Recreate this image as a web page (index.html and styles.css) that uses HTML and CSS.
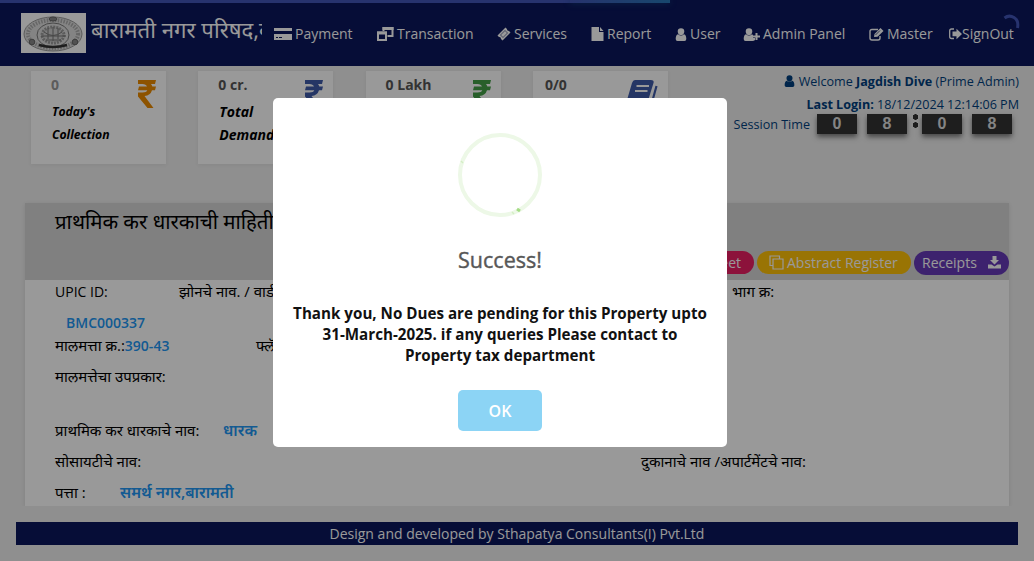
FILE: index.html
```html
<!DOCTYPE html>
<html lang="mr">
<head>
<meta charset="utf-8">
<title>बारामती नगर परिषद</title>
<link rel="stylesheet" href="styles.css">
</head>
<body>
<svg class="defs" width="0" height="0">
  <symbol id="rupee" viewBox="0 0 18 28"><path d="M0 0H18L17 4H13Q14 5 14.3 6.500H18L17 10.300H14Q12.500 15.500 6.500 16L15.500 28H9.500L0 16.500V12.500H4.500Q8.500 12.500 9.300 10.300H0L1 6.500H9Q8 4 4.500 4H0Z" fill="currentColor"/></symbol>
  <symbol id="user" viewBox="0 0 12 13"><path d="M2.700 3.500a3.300 3.300 0 0 1 6.600 0C9.300 5.500 7.700 7.300 6 7.300S2.700 5.500 2.700 3.500ZM3 6.300Q6 9 9 6.300Q11.300 7 11.300 11Q11.300 13 9.500 13H2.500Q.7 13 .7 11Q.7 7 3 6.300Z" fill="currentColor"/></symbol>
</svg>
<div class="page">
  <header class="topbar">
    <div class="brand">
      <svg class="emblem" viewBox="0 0 65 40"><rect width="65" height="40" fill="#fff"/><g fill="none" stroke="#999"><ellipse cx="32" cy="21" rx="29" ry="17" fill="#ddd"/><ellipse cx="32" cy="21" rx="25" ry="14" stroke="#aaa" stroke-width="4" stroke-dasharray="1.500 1.300"/><ellipse cx="32" cy="22" rx="16" ry="12" stroke="#777"/><ellipse cx="32" cy="22" rx="11" ry="8" fill="#ccc" stroke="#999" stroke-width="3" stroke-dasharray="2 1"/><path d="M20 23H45M23 19Q32 26 41 19M25 27H40M32 14V28M27 15V26M37 15V26" stroke="#777"/><path d="M18 32Q32 36 46 32" stroke="#333" stroke-width="2.500"/></g><g fill="#888" stroke="#666"><circle cx="11" cy="29" r="2.800"/><circle cx="54" cy="29" r="2.800"/><ellipse cx="32" cy="6" rx="4" ry="2"/></g></svg>
      <div class="brand-name">बारामती नगर परिषद,ब</div>
    </div>
    <nav class="menu">
      <a><svg width="18" height="12" viewBox="0 0 18 12"><path d="M0 0H18V3H0ZM0 6H18V12H0Z" fill="#fff"/><path d="M2 9.500H4M5 9.500H8" stroke="#0a165c"/></svg><span>Payment</span></a>
      <a><svg width="17" height="14" viewBox="0 0 17 14"><g fill="none" stroke="#fff" stroke-width="2"><path d="M6.500 4V1H15.500V9H10.500"/><path d="M1 5.500H9V13H1Z"/><path d="M5.500 1.500H16.500M0 6H10" stroke-width="3"/></g></svg><span>Transaction</span></a>
      <a><svg width="14" height="14" viewBox="0 0 14 14"><path d="M8.500.5L10 2Q9.800 4 12 4L13.500 5.500 5.500 13.500 4 12Q4 9.800 2 10L.5 8.500Z" fill="#fff"/><path d="M8 3.500L10.500 6 6 10.500 3.500 8Z" fill="none" stroke="#0a165c" stroke-width=".6"/></svg><span>Services</span></a>
      <a><svg width="13" height="14" viewBox="0 0 13 14"><path d="M.5 0H8V5H12.500V14H.5ZM9 0L12.500 4H9Z" fill="#fff"/></svg><span>Report</span></a>
      <a><svg width="12" height="13"><use href="#user"/></svg><span>User</span></a>
      <a><svg width="17" height="13" viewBox="0 0 17 13"><path d="M2.700 3.500a3.300 3.300 0 0 1 6.600 0C9.300 5.500 7.700 7.300 6 7.300S2.700 5.500 2.700 3.500ZM3 6.300Q6 9 9 6.300L10 7V10H12V12Q11 13 9.500 13H2.500Q.7 13 .7 11Q.7 7 3 6.300ZM12.500 5H14.500V7.500H17V9.500H14.500V12H12.500V9.500H10V7.500H12.500Z" fill="#fff"/></svg><span>Admin Panel</span></a>
      <a><svg width="15" height="13" viewBox="0 0 15 13"><path d="M9 1.500H3Q1 1.500 1 3.500V10Q1 12 3 12H9Q11 12 11 10V8" fill="none" stroke="#fff" stroke-width="1.400"/><path d="M5 9L5.500 6 11.500 0 14.500 3 8.500 8.700Z" fill="#fff"/><path d="M6.500 7L11 2.500" stroke="#0a165c" stroke-width=".7"/></svg><span>Master</span></a>
      <a class="signout"><svg width="13" height="12" viewBox="0 0 13 12"><path d="M5 1H2.500Q.7 1 .7 3V8.500Q.7 10.500 2.500 10.500H5" fill="none" stroke="#fff" stroke-width="1.300"/><path d="M3.500 3.500H7.500V.7L13 6 7.500 11.300V8.300H3.500Z" fill="#fff"/></svg><span>SignOut</span></a>
    </nav>
  </header>

  <section class="summary">
    <div class="cards">
      <div class="card first"><div class="figure">0</div><svg class="ico orange"><use href="#rupee"/></svg><div class="caption">Today's Collection</div></div>
      <div class="card"><div class="figure">0 cr.</div><svg class="ico blue"><use href="#rupee"/></svg><div class="caption">Total Demand</div></div>
      <div class="card"><div class="figure">0 Lakh</div><svg class="ico green"><use href="#rupee"/></svg></div>
      <div class="card last"><div class="figure">0/0</div><svg class="ico book blue" viewBox="0 0 31 28"><path d="M8 0H24Q27.500 0 26.500 3L20 24H3Q-1 24 0 20L5 3Q6 0 8 0Z" fill="currentColor"/><path d="M9.500 6H22M8 11H20.500" stroke="#fff" stroke-width="1.800"/><path d="M29.500 6L24 26H3" fill="none" stroke="currentColor" stroke-width="2.200"/></svg></div>
    </div>
    <div class="session">
      <div class="line welcome"><svg width="11" height="12" viewBox="0 0 12 13"><use href="#user"/></svg> Welcome <b>Jagdish Dive</b> (Prime Admin)</div>
      <div class="line"><b>Last Login:</b> 18/12/2024 12:14:06 PM</div>
      <div class="timer"><span class="timer-label">Session Time</span><i>0</i><i>8</i><em></em><i>0</i><i>8</i></div>
    </div>
  </section>

  <main class="panel">
    <div class="panel-head">
      <h1>प्राथमिक कर धारकाची माहिती</h1>
      <div class="actions">
        <a class="pill pink">Fact Sheet</a>
        <a class="pill yellow"><svg width="15" height="15" viewBox="0 0 15 15"><path d="M4 4H14V14H4ZM4 10.500H1V1H10.500V4" fill="none" stroke="#fff" stroke-width="1.200"/></svg>Abstract Register</a>
        <a class="pill purple">Receipts<svg width="13" height="13" viewBox="0 0 13 13"><path d="M4.500 0H8.500V4H11L6.500 8.500 2 4H4.500ZM0 8.500H3.500L6.500 10.500 9.500 8.500H13V12.500H0Z" fill="#fff"/></svg></a>
      </div>
    </div>
    <div class="details">
      <div class="row"><span class="c1 latin upic">UPIC ID:</span><span class="zone">झोनचे नाव. / वार्ड</span><span>भाग क्र:</span></div>
      <div class="row r2"><b class="latin">BMC000337</b></div>
      <div class="row r3"><span class="c1">मालमत्ता क्र.:<b>390-43</b></span><span>फ्लॅट</span></div>
      <div class="row r4"><span>मालमत्तेचा उपप्रकार:</span></div>
      <div class="row r5"><span class="c1">प्राथमिक कर धारकाचे नाव:</span><b>धारक</b></div>
      <div class="row r6"><span class="c1">सोसायटीचे नाव:</span><span>दुकानाचे नाव /अपार्टमेंटचे नाव:</span></div>
      <div class="row r7"><span class="c1">पत्ता :</span><b>समर्थ नगर,बारामती</b></div>
    </div>
  </main>
  <footer>Design and developed by Sthapatya Consultants(I) Pvt.Ltd</footer>
</div>

<div class="progress"></div>
<svg class="spinner" viewBox="0 0 20 20"><path d="M4.500 4Q9 .5 14 3.500T17.500 14" fill="none" stroke="#4155b8" stroke-width="3"/></svg>

<div class="overlay">
  <div class="modal">
    <svg class="ring" viewBox="0 0 84 84"><circle cx="42" cy="42" r="40" fill="none" stroke="#edf8e7" stroke-width="4"/><path d="M59 76L62 78" stroke="#a5dc86" stroke-width="3"/><path d="M54 79L56 81M3 28L5 30" stroke="#d3eec5" stroke-width="1.500"/></svg>
    <h2>Success!</h2>
    <p>Thank you, No Dues are pending for this Property upto<br>31-March-2025. if any queries Please contact to<br>Property tax department</p>
    <button>OK</button>
  </div>
</div>
</body>
</html>
```
FILE: styles.css
```css
* { box-sizing: border-box; }
body { margin: 0; font: 14px/20px "Open Sans", "Noto Sans", "Noto Sans Devanagari", sans-serif; background: #eee; color: #000; }
.defs { position: absolute; }
.page { width: 1034px; height: 561px; overflow: hidden; }
.topbar { height: 66px; background: #0a165c; color: #fff; display: flex; }
.brand { width: 274px; padding: 13px 0 0 21px; display: flex; gap: 5px; }
.emblem { width: 65px; height: 40px; }
.brand-name { width: 171px; height: 40px; font-size: 22.200px; line-height: 33px; overflow: hidden; white-space: nowrap; }
.menu { display: grid; grid-template-columns: 103px 120px 94px 84px 68px 126px 80px 80px; padding-top: 24px; height: 44px; }
.menu a { display: flex; align-items: center; gap: 3px; white-space: nowrap; }
.menu .signout { gap: 0; }
.summary { display: flex; justify-content: space-between; height: 137px; padding: 5px 15px 0 31px; }
.cards { display: grid; grid-template-columns: repeat(4, 135px); column-gap: 32.3px; }
.card { height: 93px; background: #fff; box-shadow: 0 1px 4px rgba(0,0,0,.06); padding: 4px 10px 0 20px; display: grid; grid-template-columns: 1fr auto; grid-template-rows: 25px 50px; }
.card.last { padding-left: 12px; }
.figure { font-weight: 700; color: #555; }
.first .figure { color: #999; }
.ico { width: 18px; height: 28px; margin-top: 5px; }
.book { width: 31px; }
.orange { color: #ec8b00; }
.blue { color: #3f5ba9; }
.green { color: #439f47; }
.caption { grid-column: 1 / 3; width: 70px; font-weight: 700; font-style: italic; line-height: 23px; padding-left: 1px; }
.first .caption { font-size: 12.200px; }
.session { color: #003f7d; font-size: 12.580px; text-align: right; white-space: nowrap; }
.line { height: 23px; line-height: 21px; }
.welcome svg { vertical-align: -1px; }
.timer { display: flex; justify-content: flex-end; height: 20px; margin-top: -3px; padding-right: 7px; }
.timer-label { margin-right: 7px; line-height: 22px; }
.timer i { width: 40px; height: 20px; margin-right: 10px; background: #333; color: #ddd; font: bold 16px/20px "Liberation Sans", sans-serif; text-align: center; box-shadow: 0 3px 5px rgba(0,0,0,.5); }
.timer i:last-child { margin-right: 0; }
.timer em { width: 5px; height: 16px; margin: 0 4px 0 -4px; background: radial-gradient(circle, #333 2.5px, transparent 3px) 0 -1px / 5px 8px; }
.panel { width: 984px; height: 303px; margin-left: 25px; background: #fff; box-shadow: 0 1px 4px rgba(0,0,0,.1); clip-path: inset(-4px -4px 0); }
.panel-head { height: 77px; background: #d5d5d5; }
h1 { margin: 0; padding: 3px 30px 0; height: 48px; font-size: 20.400px; line-height: 30px; font-weight: 400; }
.actions { display: flex; justify-content: flex-end; gap: 3px; }
.pill { height: 23px; border-radius: 12px; line-height: 23px; color: #fff; display: flex; align-items: center; white-space: nowrap; }
.pink { width: 110px; background: #e91e63; justify-content: flex-end; padding-right: 13px; }
.yellow { width: 154px; background: #ffc107; padding-left: 12px; gap: 3px; }
.purple { width: 95px; height: 24px; background: #673ab7; padding: 0 8px 1px; justify-content: space-between; }
.details { padding-left: 30px; }
.row { display: flex; height: 31px; font-size: 15px; line-height: 22px; white-space: nowrap; }
.row b { color: #2196f3; font-weight: 600; }
.row .latin { font-size: 14px; line-height: 24px; }
.upic { width: 124px; }
.zone { width: 553px; }
.r2 { padding-left: 11px; height: 23px; }
.r3 .c1 { width: 201px; }
.r3 b { font-size: 14px; line-height: 1; }
.r4 { height: 54px; }
.r5 .c1 { width: 168px; }
.r6 .c1 { width: 586px; }
.r7 .c1 { width: 65px; }
.r5 b, .r7 b { font-size: 15.600px; }
footer { width: 1002px; height: 23px; margin: 16px 0 0 16px; background: #0a165c; color: #fff; line-height: 23px; text-align: center; }
.progress { position: absolute; left: 0; top: 0; width: 670px; height: 3px; background: linear-gradient(90deg, #4155b8 85%, #2878b8); }
.progress::after { content: ""; display: block; width: 100px; height: 3px; margin-left: auto; box-shadow: 0 0 6px #164b83; }
.spinner { position: absolute; left: 1000px; top: 14px; width: 20px; height: 20px; }
.overlay { position: fixed; inset: 0; background: rgba(0,0,0,.4); }
.modal { width: 454px; height: 349px; margin: 98px 0 0 273px; padding-top: 35px; background: #fff; border-radius: 5px; display: flex; flex-direction: column; align-items: center; text-align: center; }
.ring { width: 84px; height: 84px; }
h2 { margin: 26px 0 0; font-size: 21.500px; line-height: 34px; font-weight: 400; color: #575757; -webkit-text-stroke: .4px #575757; }
p { margin: 26px 0 0; font-size: 15.180px; line-height: 21px; font-weight: 700; color: #111; white-space: nowrap; }
button { width: 84px; height: 41px; margin-top: 24px; border: 0; border-radius: 5px; background: #8cd4f5; color: #fff; font: 600 16px "Open Sans", sans-serif; }
```
